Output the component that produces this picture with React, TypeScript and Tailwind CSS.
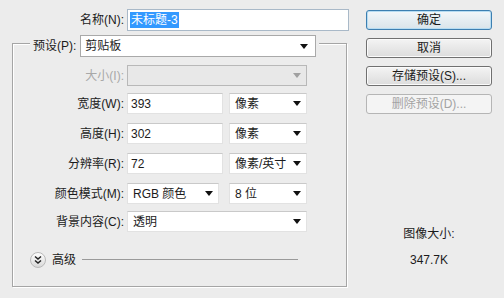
import React from 'react';

const font = { fontFamily: '"Liberation Sans", "Noto Sans CJK SC", sans-serif' };

const Arrow = ({ disabled = false }: { disabled?: boolean }) => (
    <svg width="8" height="5" viewBox="0 0 8 5" className="shrink-0">
        <path d="M0 0 L8 0 L4 5 Z" fill={disabled ? '#a0a0a0' : '#111'} />
    </svg>
);

const Select = ({ value, w }: { value: string; w: string }) => (
    <div className={`${w} h-[21px] bg-white border border-[#e2e2e2] border-t-[#c9c9c9] flex items-center justify-between pl-[5px] pr-[5px]`}>
        <span>{value}</span>
        <Arrow />
    </div>
);

const Field = ({ value, w }: { value: string; w: string }) => (
    <div className={`${w} h-[21px] bg-white border border-[#e2e2e2] border-t-[#c9c9c9] flex items-center pl-[3px]`}>
        {value}
    </div>
);

const Row = ({ label, children }: { label: string; children: React.ReactNode }) => (
    <div className="flex items-center h-[21px]">
        <div className="w-[111px] text-right">{label}</div>
        <div className="ml-[3px] flex items-center">{children}</div>
    </div>
);

const Btn = ({ label, primary = false, disabled = false }: { label: string; primary?: boolean; disabled?: boolean }) => (
    <div
        className={`w-[126px] h-[20px] rounded-[3px] border flex items-center justify-center ${
            primary
                ? 'border-[#3c7fb1] bg-gradient-to-b from-[#f2f7fa] to-[#d9e4ea] shadow-[inset_0_0_0_1px_#b6dcf2]'
                : disabled
                ? 'border-[#b5b5b5] bg-[#f4f4f4] text-[#a3a3a3]'
                : 'border-[#707070] bg-gradient-to-b from-[#f4f4f4] to-[#dcdcdc] shadow-[inset_0_0_0_1px_#fbfbfb]'
        }`}
    >
        {label}
    </div>
);

export default function App() {
    return (
        <div style={font} className="w-[504px] h-[298px] bg-[#ececec] text-[12px] text-[#1b1b1b] flex overflow-hidden">
            {/* Left column */}
            <div className="w-[352px] pt-[9px]">
                <div className="flex items-center h-[22px]">
                    <div className="w-[124px] text-right">名称(N):</div>
                    <div className="ml-[3px] w-[222px] h-[22px] bg-white border border-[#a9b9c8] flex items-center pl-[2px]">
                        <span className="bg-[#3399ff] text-white px-[1px] leading-[16px]">未标题-3</span>
                    </div>
                </div>

                {/* Group box */}
                <div className="ml-[12px] mt-[12px] w-[335px] h-[244px] border border-[#a5a5a5] shadow-[1px_1px_0_#fff,inset_1px_1px_0_#fff]">
                    <div className="-mt-[9px] ml-[17px] w-max flex items-center bg-[#ececec] px-[3px]">
                        <span>预设(P):</span>
                        <div className="ml-[4px] w-[236px] h-[22px] bg-white border border-[#a9a9a9] flex items-center justify-between pl-[4px] pr-[7px]">
                            <span>剪贴板</span>
                            <Arrow />
                        </div>
                    </div>

                    <div className="mt-[8px] flex flex-col gap-[9px]">
                        <Row label="">
                            <div className="w-[180px] h-[21px] bg-[#e8e8e8] border border-[#b8b8b8] flex items-center justify-end pr-[5px]">
                                <Arrow disabled />
                            </div>
                        </Row>
                    </div>
                    <div className="-mt-[21px] flex items-center h-[21px]">
                        <div className="w-[111px] text-right text-[#a8a8a8]">大小(I):</div>
                    </div>

                    <div className="mt-[7px] flex flex-col gap-[9px]">
                        <Row label="宽度(W):">
                            <Field value="393" w="w-[96px]" />
                            <div className="ml-[6px]"><Select value="像素" w="w-[78px]" /></div>
                        </Row>
                        <Row label="高度(H):">
                            <Field value="302" w="w-[96px]" />
                            <div className="ml-[6px]"><Select value="像素" w="w-[78px]" /></div>
                        </Row>
                        <Row label="分辨率(R):">
                            <Field value="72" w="w-[96px]" />
                            <div className="ml-[6px]"><Select value="像素/英寸" w="w-[78px]" /></div>
                        </Row>
                        <Row label="颜色模式(M):">
                            <Select value="RGB 颜色" w="w-[92px]" />
                            <div className="ml-[10px]"><Select value="8 位" w="w-[78px]" /></div>
                        </Row>
                    </div>
                    <div className="mt-[7px]">
                        <Row label="背景内容(C):">
                            <Select value="透明" w="w-[180px]" />
                        </Row>
                    </div>

                    {/* Advanced */}
                    <div className="mt-[20px] ml-[17px] flex items-center h-[16px]">
                        <svg width="16" height="16" viewBox="0 0 16 16">
                            <defs>
                                <linearGradient id="adv" x1="0" y1="0" x2="0" y2="1">
                                    <stop offset="0" stopColor="#ffffff" />
                                    <stop offset="1" stopColor="#d8d8d8" />
                                </linearGradient>
                            </defs>
                            <circle cx="8" cy="8" r="7.5" fill="url(#adv)" stroke="#b9b9b9" />
                            <path d="M5 4.5 L8 7 L11 4.5 M5 8.5 L8 11 L11 8.5" fill="none" stroke="#222" strokeWidth="1.5" />
                        </svg>
                        <span className="ml-[6px]">高级</span>
                        <div className="ml-[6px] w-[216px] h-[1px] bg-[#9a9a9a] -mt-[2px]" />
                    </div>
                </div>
            </div>

            {/* Right column */}
            <div className="ml-[14px] pt-[10px] w-[126px] flex flex-col">
                <div className="flex flex-col gap-[8px]">
                    <Btn label="确定" primary />
                    <Btn label="取消" />
                    <Btn label="存储预设(S)..." />
                    <Btn label="删除预设(D)..." disabled />
                </div>
                <div className="mt-[111px] text-center">图像大小:</div>
                <div className="mt-[8px] text-center">347.7K</div>
            </div>
        </div>
    );
}
